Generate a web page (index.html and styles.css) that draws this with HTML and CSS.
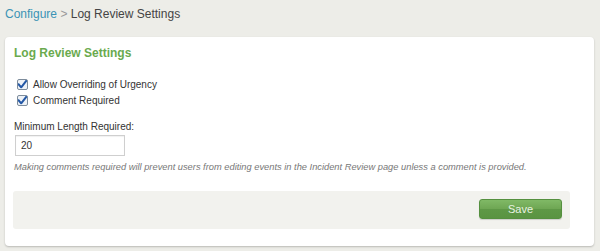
FILE: index.html
```html
<html><head>
<meta charset="UTF-8">
<meta name="viewport" content="width=device-width, initial-scale=1.0">
<title>Log Review Settings</title>
<link rel="stylesheet" href="styles.css">
</head>
<body>
  <div class="breadcrumb">
    <a href="#" class="crumb-link">Configure</a>
    <span class="crumb-sep">&gt;</span>
    <span class="crumb-current">Log Review Settings</span>
  </div>

  <div class="panel">
    <h2 class="panel-title">Log Review Settings</h2>

    <div class="options">
      <label class="option">
        <input type="checkbox" checked>
        <span>Allow Overriding of Urgency</span>
      </label>
      <label class="option">
        <input type="checkbox" checked>
        <span>Comment Required</span>
      </label>
    </div>

    <div class="field">
      <label class="field-label" for="min-length">Minimum Length Required:</label>
      <input type="text" id="min-length" class="text-input" value="20">
      <p class="help">Making comments required will prevent users from editing events in the Incident Review page unless a comment is provided.</p>
    </div>

    <div class="form-footer">
      <button class="btn-save">Save</button>
    </div>
  </div>
</body></html>
```

FILE: styles.css
```css
:root {
  --bg-color: #edede8;
  --link-color: #3b93b5;
  --title-color: #6aaa4e;
  --text-color: #333;
  --muted-color: #777;
}

body {
  margin: 0;
  padding: 0;
  background: var(--bg-color);
  font-family: 'Liberation Sans', Arial, sans-serif;
  color: var(--text-color);
}

.breadcrumb {
  padding: 7px 5px 0;
  font-size: 12px;
  line-height: 14px;
  height: 14px;
}

.crumb-link {
  color: var(--link-color);
  text-decoration: none;
}

.crumb-sep {
  color: #999;
}

.crumb-current {
  color: #444;
}

.panel {
  margin: 16px 6px 0 5px;
  padding: 9px 24px 17px 9px;
  background: #fff;
  border-radius: 4px;
  box-shadow: 0 1px 2px rgba(0, 0, 0, 0.22);
}

.panel-title {
  margin: 0;
  font-size: 12px;
  line-height: 14px;
  font-weight: 700;
  color: var(--title-color);
}

.options {
  margin-top: 16px;
  padding-left: 3px;
}

.option {
  display: flex;
  align-items: center;
  gap: 5px;
  height: 16px;
  font-size: 10px;
  color: #333;
}

/* old-style checkbox: light box, blue tick */
.option input {
  -webkit-appearance: none;
  appearance: none;
  box-sizing: border-box;
  width: 11px;
  height: 11px;
  margin: 0;
  border: 1px solid #7d8c9c;
  border-radius: 2px;
  background-color: #eef2f7;
  background-repeat: no-repeat;
  background-position: center;
  background-size: 11px 11px;
}

.option input:checked {
  background-image: url("data:image/svg+xml;utf8,<svg xmlns='http://www.w3.org/2000/svg' viewBox='0 0 11 11'><path d='M1.5 5.2 L4.2 8.3 L10.2 0.6' fill='none' stroke='%232458a6' stroke-width='2' stroke-linecap='round' stroke-linejoin='round'/></svg>");
}

.field {
  margin-top: 13px;
}

.field-label {
  display: block;
  font-size: 10px;
  line-height: 12px;
  color: #333;
}

.text-input {
  display: block;
  box-sizing: border-box;
  margin: 2px 0 0 1px;
  width: 110px;
  height: 21px;
  padding: 0 5px;
  border: 1px solid #cfcfcf;
  box-shadow: inset 0 1px 1px rgba(0, 0, 0, 0.06);
  font-family: inherit;
  font-size: 10px;
  color: #333;
}

.help {
  margin: 5px 0 0;
  font-size: 9.3px;
  line-height: 12px;
  font-style: italic;
  color: var(--muted-color);
}

.form-footer {
  margin: 18px 0 0 -1px;
  padding: 8px 8px 10px;
  background: #f2f2ee;
  border-radius: 3px;
  display: flex;
  justify-content: flex-end;
}

.btn-save {
  width: 83px;
  height: 20px;
  padding: 0;
  border: 1px solid #55903f;
  border-radius: 3px;
  background: linear-gradient(to bottom, #80b966 0%, #6ea653 50%, #5e9846 51%, #5a9442 100%);
  color: #e9f3e2;
  font-family: inherit;
  font-size: 11px;
  box-shadow: 0 1px 1px rgba(0, 0, 0, 0.15);
}
```
